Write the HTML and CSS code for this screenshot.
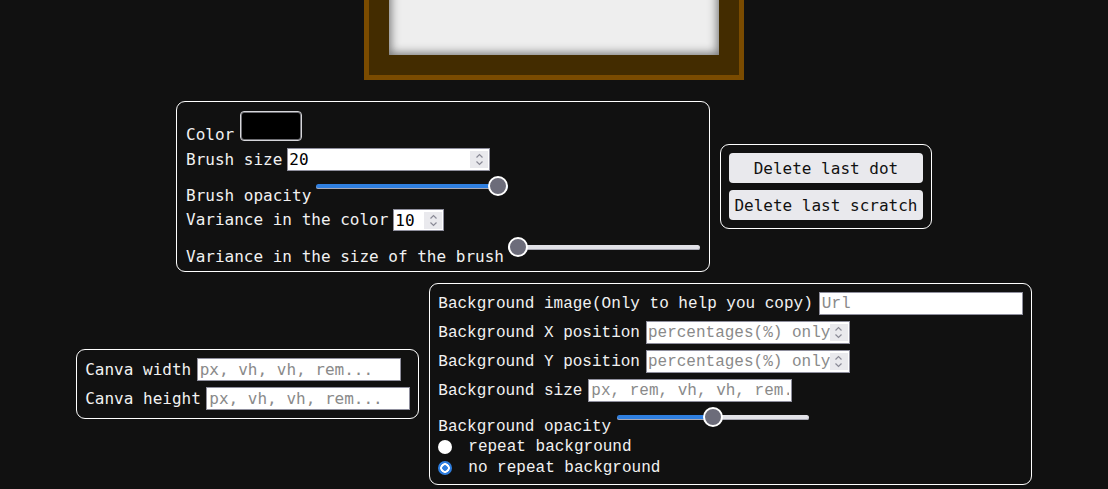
FILE: index.html
```html
<!DOCTYPE html>
<html lang="en">
<head>
<meta charset="utf-8">
<title>Scratch painter</title>
<link rel="stylesheet" href="styles.css">
</head>
<body>
<div class="stage">
  <div class="frame"><div class="canvas"></div></div>

  <div class="row row-top">
    <div class="panel brush">
      <div class="line line-color">
        <span class="lbl">Color</span>
        <span class="swatch"></span>
      </div>
      <div class="line line-input">
        <span class="lbl">Brush size</span>
        <span class="num w203"><input class="num-field" type="text" value="20"><span class="spin"><svg width="11" height="17" viewBox="0 0 11 17"><path d="M2.5 6.5 L5.5 3.5 L8.5 6.5 M2.5 10.5 L5.5 13.5 L8.5 10.5" fill="none" stroke="#8a8a96" stroke-width="1.2"/></svg></span></span>
      </div>
      <div class="line line-range">
        <span class="lbl">Brush opacity</span>
        <input class="range fill-full" type="range" min="0" max="100" value="100">
      </div>
      <div class="line line-input small">
        <span class="lbl">Variance in the color</span>
        <span class="num w51"><input class="num-field" type="text" value="10"><span class="spin"><svg width="11" height="17" viewBox="0 0 11 17"><path d="M2.5 6.5 L5.5 3.5 L8.5 6.5 M2.5 10.5 L5.5 13.5 L8.5 10.5" fill="none" stroke="#8a8a96" stroke-width="1.2"/></svg></span></span>
      </div>
      <div class="line line-range last">
        <span class="lbl">Variance in the size of the brush</span>
        <input class="range fill-none" type="range" min="0" max="100" value="0">
      </div>
    </div>

    <div class="panel actions">
      <button class="btn" type="button">Delete last dot</button>
      <button class="btn" type="button">Delete last scratch</button>
    </div>
  </div>

  <div class="row row-bottom">
    <div class="panel canva">
      <div class="line line-input">
        <span class="lbl">Canva width</span>
        <input class="txt" type="text" placeholder="px, vh, vh, rem...">
      </div>
      <div class="line line-input">
        <span class="lbl">Canva height</span>
        <input class="txt" type="text" placeholder="px, vh, vh, rem...">
      </div>
    </div>

    <div class="panel bgpanel">
      <div class="line line-input">
        <span class="lbl">Background image(Only to help you copy)</span>
        <input class="txt" type="text" placeholder="Url">
      </div>
      <div class="line line-input">
        <span class="lbl">Background X position</span>
        <span class="num w204"><input class="num-field" type="text" placeholder="percentages(%) only"><span class="spin"><svg width="11" height="17" viewBox="0 0 11 17"><path d="M2.5 6.5 L5.5 3.5 L8.5 6.5 M2.5 10.5 L5.5 13.5 L8.5 10.5" fill="none" stroke="#8a8a96" stroke-width="1.2"/></svg></span></span>
      </div>
      <div class="line line-input">
        <span class="lbl">Background Y position</span>
        <span class="num w204"><input class="num-field" type="text" placeholder="percentages(%) only"><span class="spin"><svg width="11" height="17" viewBox="0 0 11 17"><path d="M2.5 6.5 L5.5 3.5 L8.5 6.5 M2.5 10.5 L5.5 13.5 L8.5 10.5" fill="none" stroke="#8a8a96" stroke-width="1.2"/></svg></span></span>
      </div>
      <div class="line line-input">
        <span class="lbl">Background size</span>
        <input class="txt" type="text" placeholder="px, rem, vh, vh, rem...">
      </div>
      <div class="line line-range">
        <span class="lbl">Background opacity</span>
        <input class="range fill-half" type="range" min="0" max="100" value="50">
      </div>
      <label class="line radio-line">
        <span class="radio"></span>
        <span class="lbl">repeat background</span>
      </label>
      <label class="line radio-line">
        <span class="radio checked"></span>
        <span class="lbl">no repeat background</span>
      </label>
    </div>
  </div>
</div>
</body>
</html>
```

FILE: styles.css
```css
* { box-sizing: border-box; }

html, body {
  margin: 0;
  padding: 0;
  background: #111111;
}

body {
  height: 489px;
  overflow: hidden;
  color: #f2f2f2;
  font-family: "DejaVu Sans Mono", "Liberation Mono", monospace;
  font-size: 16px;
}

.stage {
  display: flex;
  flex-direction: column;
  align-items: center;
}

/* drawing frame (its top is scrolled out of view) */
.frame {
  margin-top: -270px;
  width: 380px;
  height: 350px;
  padding: 20px;
  border: 5px solid #7a4b00;
  background: #432c00;
}

.canvas {
  width: 100%;
  height: 100%;
  background: #eeeeee;
  box-shadow: inset 0 0 10px 2px rgba(0, 0, 0, 0.5);
}

.row {
  display: flex;
  justify-content: center;
  align-items: center;
  gap: 10px;
}

.row-top { margin-top: 21px; }
.row-bottom { margin-top: 11px; }

.panel {
  border: 1px solid #ffffff;
  border-radius: 9px;
  display: flex;
  flex-direction: column;
}

.line {
  display: flex;
  align-items: center;
  gap: 5px;
  white-space: nowrap;
}

.lbl {
  line-height: 18px;
}

/* brush panel */
.brush {
  padding: 9px 9px 5px 9px;
}

.line-color {
  align-items: flex-end;
  height: 33px;
  gap: 6px;
}

.swatch {
  width: 62px;
  height: 30px;
  margin-bottom: 3px;
  background: #000;
  border: 1px solid #d6d6da;
  border-radius: 4px;
  box-shadow: inset 0 0 0 1px #6d6d72;
}

.brush .line-input { margin-top: 4px; height: 23px; }
.brush .line-input.small { margin-top: 4px; height: 22px; }
.brush .line-range { margin-top: 6px; }
.brush .line-range.last { margin-top: 7px; gap: 4px; }

.line-range {
  align-items: flex-end;
  height: 28px;
}

/* inputs */
.txt {
  width: 204px;
  height: 23px;
  margin: 0;
  padding: 0 2px;
  border: 1px solid #8f8f9d;
  border-radius: 0;
  background: #fff;
  color: #000;
  font: inherit;
  outline: none;
}

.txt::placeholder,
.num-field::placeholder {
  color: #8a8a8a;
  opacity: 1;
}

.num {
  display: inline-flex;
  align-items: center;
  height: 100%;
  border: 1px solid #8f8f9d;
  background: #fff;
  overflow: hidden;
}

.w203 { width: 203px; }
.w51 { width: 51px; }
.w204 { width: 204px; }

.num-field {
  flex: 1 1 auto;
  min-width: 0;
  height: 100%;
  margin: 0;
  padding: 0 0 0 1px;
  border: none;
  background: transparent;
  color: #000;
  font: inherit;
  outline: none;
}

.spin {
  flex: none;
  display: flex;
  align-items: center;
  justify-content: center;
  width: 18px;
  height: 17px;
  margin-right: 1px;
  background: #e9e9ed;
}

/* sliders */
.range {
  -webkit-appearance: none;
  appearance: none;
  width: 192px;
  height: 20px;
  margin: 0 0 9px 0;
  padding: 0;
  background: transparent;
  --fill: 0%;
}

.fill-full { --fill: 100%; }
.fill-half { --fill: 50%; }
.fill-none { --fill: 0%; }

.range::-webkit-slider-runnable-track {
  height: 5px;
  border-radius: 3px;
  background: linear-gradient(to right, #2f7fe0 0, #2f7fe0 var(--fill), #e1e1e7 var(--fill), #e1e1e7 100%);
  box-shadow: inset 0 -1px 0 #a8a8b4;
}

.range::-webkit-slider-thumb {
  -webkit-appearance: none;
  appearance: none;
  width: 20px;
  height: 20px;
  margin-top: -7.5px;
  border-radius: 50%;
  background: #6c6c7a;
  border: 2px solid #ffffff;
}

/* action buttons */
.actions {
  padding: 8px;
  gap: 7px;
}

.btn {
  height: 30px;
  margin: 0;
  padding: 0 5.5px;
  border: none;
  border-radius: 4px;
  background: #e9e9ed;
  color: #111;
  font: inherit;
  white-space: nowrap;
}

/* canva panel */
.canva {
  padding: 8px;
  gap: 6px;
}

.canva .line { height: 23px; gap: 5.5px; }

/* background panel */
.bgpanel {
  padding: 8px 8px 6px 8px;
  font-family: "Liberation Mono", "DejaVu Sans Mono", monospace;
}

.bgpanel .line { gap: 6px; }
.bgpanel .line-input { height: 23px; margin-bottom: 6px; }
.bgpanel .line-range { margin-bottom: 0; }

.bgpanel .radio-line {
  height: 21px;
  gap: 16px;
}

.radio {
  flex: none;
  width: 14px;
  height: 14px;
  border-radius: 50%;
  background: #ffffff;
}

.radio.checked {
  background: radial-gradient(circle, #2f7fe0 0, #2f7fe0 2.5px, #ffffff 3px, #ffffff 4.5px, #2f7fe0 5px);
}
```
